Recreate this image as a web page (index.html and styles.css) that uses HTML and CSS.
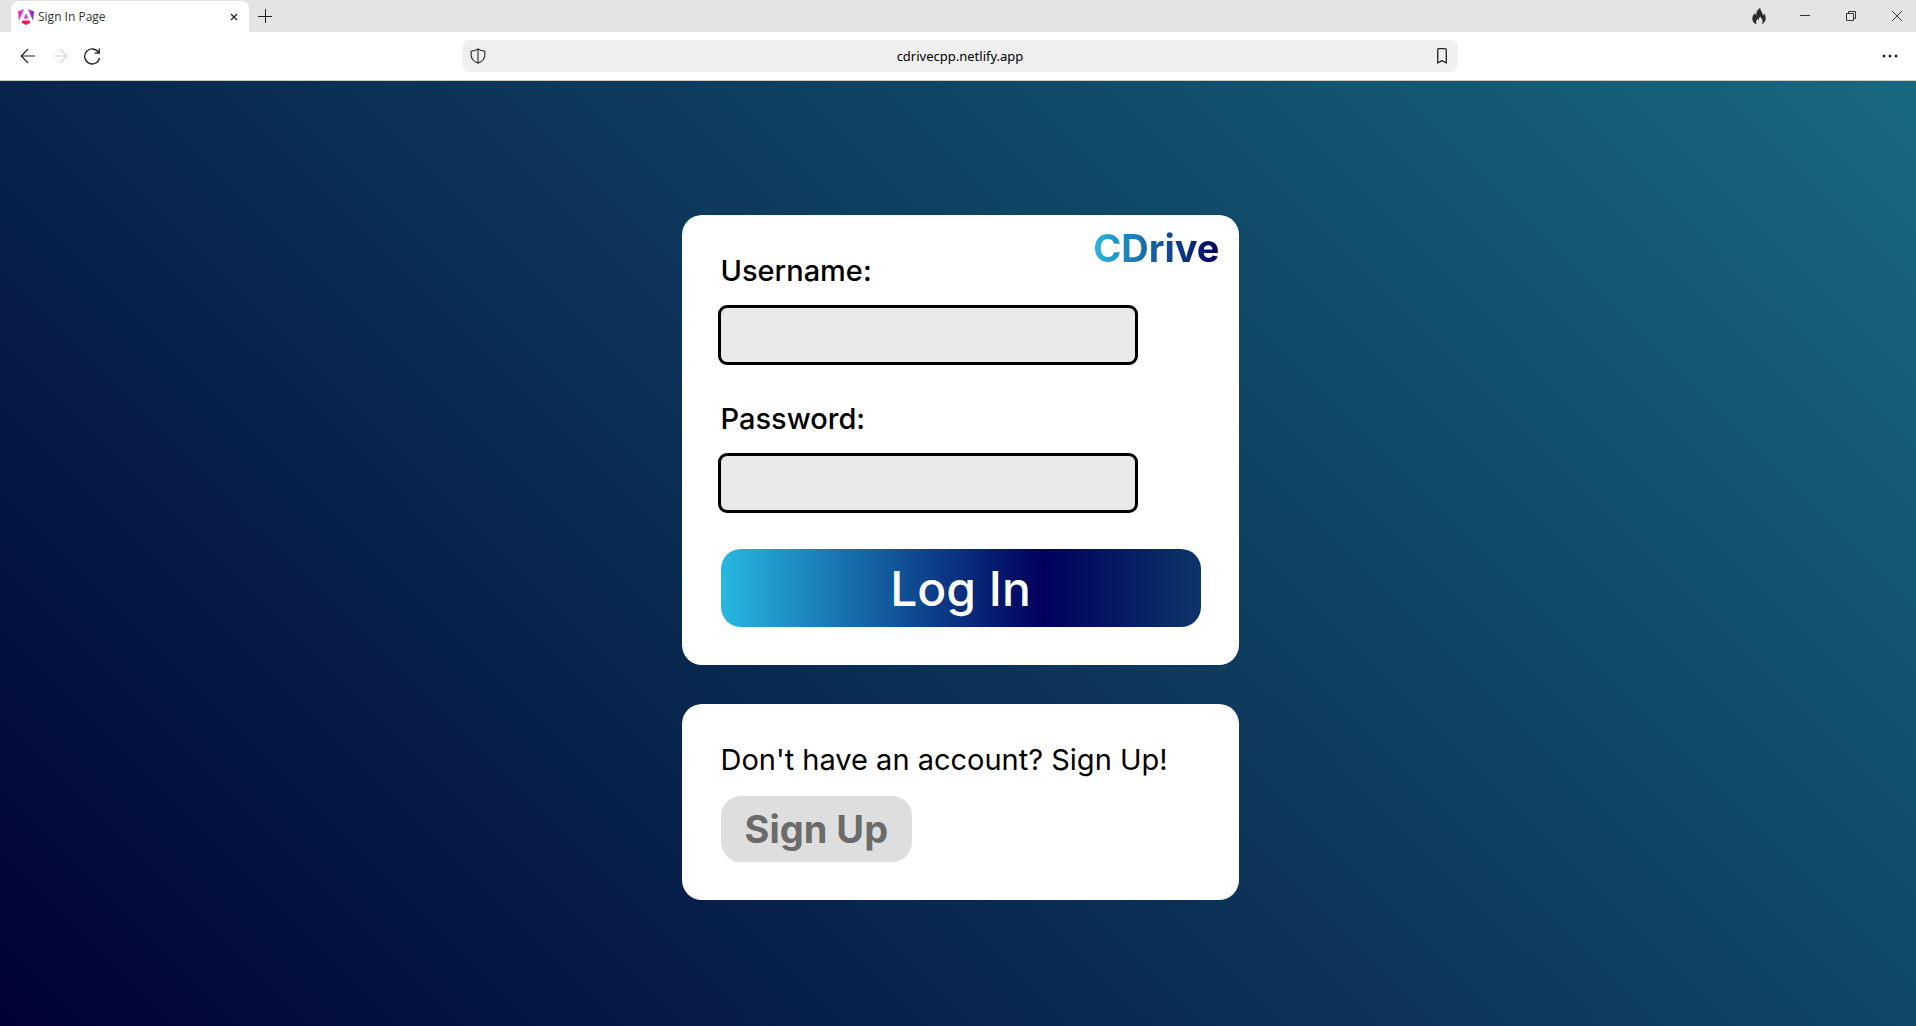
FILE: index.html
```html
<!DOCTYPE html>
<html lang="en">
<head>
<meta charset="utf-8">
<meta name="viewport" content="width=device-width, initial-scale=1">
<title>Sign In Page</title>
<link rel="stylesheet" href="styles.css">
</head>
<body>
<header class="browser">
  <div class="tabstrip">
    <div class="tab">
      <svg class="favicon" width="16" height="16" viewBox="0 0 16 16" aria-hidden="true">
        <defs>
          <linearGradient id="shield" x1="0" y1="0" x2="1" y2="0">
            <stop offset="0" stop-color="#fb2ba8"/>
            <stop offset=".55" stop-color="#d42de0"/>
            <stop offset="1" stop-color="#7a1cf5"/>
          </linearGradient>
          <linearGradient id="base" x1="0" y1="0" x2="1" y2="0">
            <stop offset="0" stop-color="#f0103c"/>
            <stop offset="1" stop-color="#f01a7c"/>
          </linearGradient>
        </defs>
        <path fill="url(#shield)" d="M6 0 0 2.600 1 11.800 6 0ZM10 0 16 2.600 15 11.800 10 0ZM8 4.200 5.800 9.400H10.200Z"/>
        <path fill="url(#base)" d="M4.600 11.600H11.400L12.400 13.800 8 16 3.600 13.800Z"/>
      </svg>
      <span class="tab-title">Sign In Page</span>
      <button class="icon-btn tab-close" type="button" aria-label="Close tab">
        <svg width="8" height="8" viewBox="0 0 8 8"><path d="M1 1 7 7M7 1 1 7" stroke="#222" stroke-width="1.3"/></svg>
      </button>
    </div>
    <button class="icon-btn new-tab" type="button" aria-label="New tab">
      <svg width="14" height="14" viewBox="0 0 14 14"><path d="M7.500 0V14M0 7.500H14" stroke="#222" stroke-width="1"/></svg>
    </button>
    <div class="window-controls">
      <button class="icon-btn control" type="button" aria-label="Clear data">
        <svg width="14" height="17" viewBox="0 0 14 17"><path fill="#2b2b2b" d="M8.200 0C4.600 2.200 4.100 4.600 4.600 7.200 3.600 6.900 3.200 6 3.200 4.900 1.200 6.700.3 8.600.3 10.700.3 13.300 2 15.300 4.500 16.300 3.500 13.800 4.300 12.300 5.700 10.800 5.800 11.600 6.100 12 6.700 12.300 6.600 10.600 7.200 9.300 8.600 8.500 8.500 10.300 10.700 11.300 10.600 13.500 10.600 14.700 10.200 15.500 9.500 16.300 12 15.300 13.700 13.200 13.700 10.700 13.700 8.600 13.100 6.900 12.500 5.600 12.200 6.700 11.700 7.400 10.900 7.700 11.200 4.600 8.600 3.300 8.200 0Z"/></svg>
      </button>
      <button class="icon-btn control" type="button" aria-label="Minimize">
        <svg width="10" height="10" viewBox="0 0 10 10"><path d="M0 4.500H10" stroke="#333"/></svg>
      </button>
      <button class="icon-btn control" type="button" aria-label="Restore">
        <svg width="10" height="10" viewBox="0 0 10 10"><path d="M.5 2.500H7.500V9.500H.5ZM2.500 2.500V.5H9.500V7.500H7.500" fill="none" stroke="#333"/></svg>
      </button>
      <button class="icon-btn control control-close" type="button" aria-label="Close">
        <svg width="10" height="10" viewBox="0 0 10 10"><path d="M0 0 10 10M10 0 0 10" stroke="#333"/></svg>
      </button>
    </div>
  </div>
  <nav class="toolbar">
    <div class="nav-buttons">
      <button class="icon-btn nav" type="button" aria-label="Back">
        <svg width="16" height="16" viewBox="0 0 16 16"><path d="M15 8H1.500M8 1 1.200 8 8 15" fill="none" stroke="#222" stroke-width="1.200"/></svg>
      </button>
      <button class="icon-btn nav" type="button" aria-label="Forward" disabled>
        <svg width="16" height="16" viewBox="0 0 16 16"><path d="M1 8H14.500M8 1 14.800 8 8 15" fill="none" stroke="#d6d6d6" stroke-width="1.200"/></svg>
      </button>
      <button class="icon-btn nav" type="button" aria-label="Reload">
        <svg width="18" height="18" viewBox="0 0 18 18"><path d="M16.500 11A7.500 7.500 0 1 1 15.600 5.600M16.300 1.500V6.200H11.600" fill="none" stroke="#222" stroke-width="1.300"/></svg>
      </button>
    </div>
    <div class="address">
      <svg width="16" height="16" viewBox="0 0 18 18" aria-hidden="true"><path d="M9 1C7 2.600 4.200 3.500 1.300 3.500V8C1.300 12.500 4.500 15.500 9 17 13.500 15.500 16.700 12.500 16.700 8V3.500C13.800 3.500 11 2.600 9 1ZM9 1V17" fill="none" stroke="#333" stroke-width="1.300" stroke-linejoin="round"/></svg>
      <input class="url" type="text" value="cdrivecpp.netlify.app" aria-label="Address">
      <button class="icon-btn bookmark" type="button" aria-label="Bookmark">
        <svg width="10" height="16" viewBox="0 0 10 16"><path d="M.7 2Q.7.700 2 .7H8Q9.300.700 9.300 2V15L5 12.600.7 15Z" fill="none" stroke="#222" stroke-width="1.300" stroke-linejoin="round"/></svg>
      </button>
    </div>
    <button class="icon-btn menu" type="button" aria-label="Menu">
      <svg width="16" height="4" viewBox="0 0 16 4"><g fill="#222"><circle cx="2" cy="2" r="1.500"/><circle cx="8" cy="2" r="1.500"/><circle cx="14" cy="2" r="1.500"/></g></svg>
    </button>
  </nav>
</header>
<main class="page">
  <form class="card login">
    <h1 class="logo">CDrive</h1>
    <div class="field">
      <label class="label" for="username">Username:</label>
      <input class="text-input" id="username" type="text">
    </div>
    <div class="field">
      <label class="label" for="password">Password:</label>
      <input class="text-input" id="password" type="password">
    </div>
    <button class="login-btn" type="button">Log In</button>
  </form>
  <section class="card signup">
    <p class="prompt">Don't have an account? Sign Up!</p>
    <button class="signup-btn" type="button">Sign Up</button>
  </section>
</main>
</body>
</html>
```
FILE: styles.css
```css
*, *::before, *::after { box-sizing: border-box; }

body {
  margin: 0;
  min-height: 100vh;
  display: flex;
  flex-direction: column;
  font-family: Inter, "Liberation Sans", sans-serif;
  color: #000;
}

button, input { font: inherit; }

svg { display: block; flex: none; }

.icon-btn {
  display: flex;
  align-items: center;
  justify-content: center;
  padding: 0;
  border: 0;
  background: none;
}

/* Browser frame */
.browser {
  background: #fff;
  border-bottom: 1px solid #ccc;
  font-family: "Noto Sans", sans-serif;
  font-size: 13px;
}

.tabstrip {
  display: flex;
  align-items: center;
  height: 32px;
  padding-left: 11px;
  background: #e4e4e4;
}

.tab {
  display: flex;
  align-items: center;
  align-self: flex-end;
  gap: 4px;
  width: 238px;
  height: 31px;
  padding: 0 7px;
  border-radius: 8px 8px 0 0;
  background: #fff;
}

.tab-title {
  flex: 1;
  font-family: "Open Sans", sans-serif;
  font-size: 12px;
  color: #333;
}

.tab-close { width: 16px; height: 16px; }
.new-tab { width: 32px; height: 32px; }

.window-controls { display: flex; margin-left: auto; }
.control { width: 46px; height: 32px; }
.control-close { width: 42px; padding-left: 4px; }

.toolbar {
  display: grid;
  grid-template-columns: 1fr 52.5% 1fr;
  align-items: center;
  height: 48px;
  padding: 0 8px 0 12px;
}

.nav-buttons { display: flex; }
.nav { width: 32px; height: 32px; }

.address {
  display: flex;
  align-items: center;
  height: 32px;
  padding: 0 8px;
  border-radius: 8px;
  background: #efefef;
}

.url {
  flex: 1;
  min-width: 0;
  border: 0;
  padding: 0;
  background: none;
  text-align: center;
  color: #000;
}

.bookmark { width: 16px; height: 24px; }
.menu { width: 36px; height: 32px; margin-left: auto; }

/* Sign-in page */
.page {
  flex: 1;
  display: flex;
  flex-direction: column;
  align-items: center;
  gap: 39px;
  padding: 134px 16px 48px 20px;
  background: linear-gradient(45deg, #000233, #18697f);
}

.card {
  display: flex;
  flex-direction: column;
  width: 100%;
  max-width: 557px;
  padding: 38px;
  padding-left: 39px;
  border-radius: 20px;
  background: #fff;
}

.login { position: relative; gap: 36px; }

.logo {
  position: absolute;
  top: 9px;
  right: 19px;
  margin: 0;
  font-size: 38px;
  line-height: 48px;
  font-weight: 700;
  background: linear-gradient(90deg, #27b8e0, #00005c);
  -webkit-background-clip: text;
  background-clip: text;
  color: transparent;
}

.field {
  display: flex;
  flex-direction: column;
  gap: 16px;
}

.label {
  font-size: 29px;
  line-height: 36px;
  font-weight: 500;
}

.text-input {
  width: 100%;
  max-width: 420px;
  height: 60px;
  margin-left: -3px;
  padding: 0 12px;
  border: 3px solid #000;
  border-radius: 9px;
  background: #e9e9e9;
  font-size: 29px;
}

.login-btn {
  height: 78px;
  border: 0;
  border-radius: 20px;
  background: linear-gradient(90deg, #27b8e0, #00005c 67%, #0c356a);
  color: #fff;
  font-size: 48px;
  font-weight: 500;
}

.signup { align-items: flex-start; gap: 18px; }

.prompt {
  margin: 0;
  font-size: 29px;
  line-height: 36px;
}

.signup-btn {
  height: 66px;
  padding: 0 24px;
  border: 0;
  border-radius: 20px;
  background: #dedede;
  color: #6b6b6b;
  font-size: 38px;
  font-weight: 700;
}
```
